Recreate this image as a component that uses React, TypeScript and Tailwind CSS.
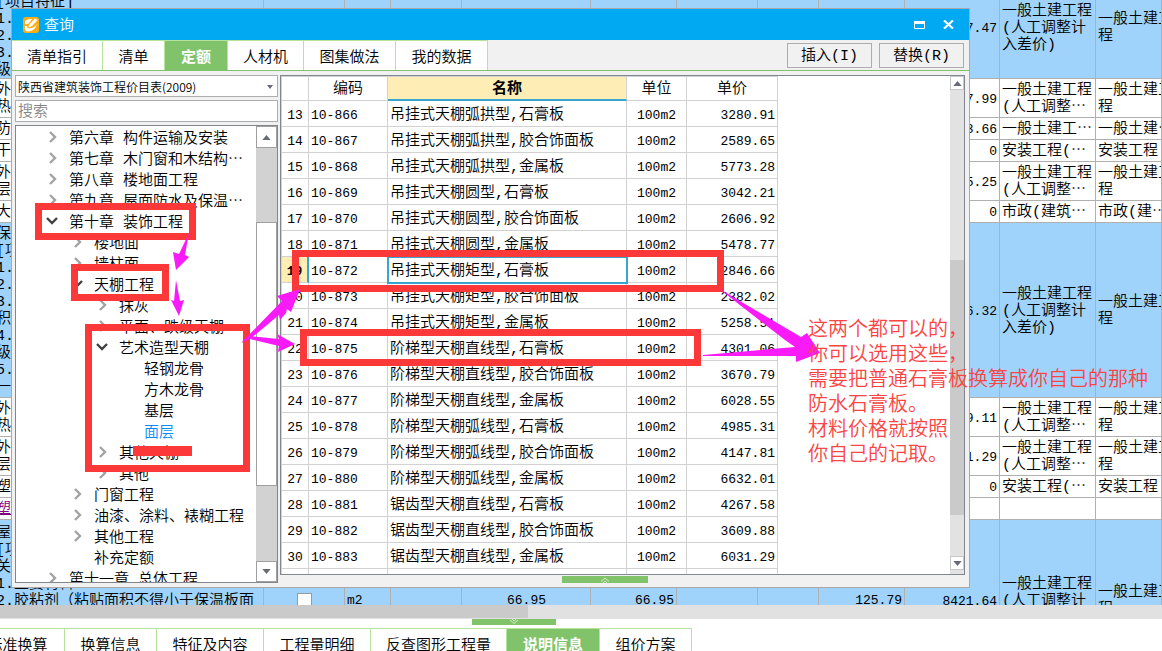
import { useState } from 'react';
import clsx from 'clsx';

interface SheetRow {
  lines: string[];
  height: string;
  amount: string;
  type: string[];
  category: string[];
  blue?: boolean;
  link?: boolean;
  full?: boolean;
}

interface TreeNode {
  label: string;
  level: number;
  state: 'open' | 'closed' | 'leaf';
  selected?: boolean;
}

const sheetRows: SheetRow[] = [
  { lines: ['', '[项目特征]', '1.', '2.', '3.', '级'], height: 'h-[103px]', amount: '7.47', type: ['一般土建工程', '(人工调整计', '入差价)'], category: ['一般土建工', '程'], blue: true },
  { lines: ['外', '热'], height: 'h-[39px]', amount: '7.99', type: ['一般土建工程', '(人工调整⋯'], category: ['一般土建工', '程'] },
  { lines: ['防'], height: 'h-[22px]', amount: '3.66', type: ['一般土建工⋯'], category: ['一般土建⋯'] },
  { lines: ['干'], height: 'h-[22px]', amount: '0', type: ['安装工程(⋯'], category: ['安装工程'] },
  { lines: ['外', '层'], height: 'h-[39px]', amount: '5.25', type: ['一般土建工程', '(人工调整⋯'], category: ['一般土建工', '程'] },
  { lines: ['大'], height: 'h-[22px]', amount: '0', type: ['市政(建筑⋯'], category: ['市政(建⋯'] },
  { lines: ['保', '[项', '1.', '2.', '3.', '积', '4.', '级', '5.', '一'], height: 'h-[175px]', amount: '6.32', type: ['一般土建工程', '(人工调整计', '入差价)'], category: ['一般土建工', '程'], blue: true },
  { lines: ['外', '热'], height: 'h-[39px]', amount: '9.11', type: ['一般土建工程', '(人工调整⋯'], category: ['一般土建工', '程'] },
  { lines: ['外', '层'], height: 'h-[39px]', amount: '1.29', type: ['一般土建工程', '(人工调整⋯'], category: ['一般土建工', '程'] },
  { lines: ['塑'], height: 'h-[22px]', amount: '0', type: ['安装工程(⋯'], category: ['安装工程'] },
  { lines: ['塑'], height: 'h-[22px]', amount: '', type: [], category: [], link: true },
  { lines: ['屋', '[项', '关', '1.主要材料', '2.胶粘剂（粘贴面积不得小于保温板面', '', '', '', ''], height: 'h-[161px]', amount: '8421.64', type: ['一般土建工程', '(人工调整计', '入差价)'], category: ['一般土建工', '程'], blue: true, full: true },
];

const treeNodes: TreeNode[] = [
  { label: '第六章 构件运输及安装', level: 0, state: 'closed' },
  { label: '第七章 木门窗和木结构⋯', level: 0, state: 'closed' },
  { label: '第八章 楼地面工程', level: 0, state: 'closed' },
  { label: '第九章 屋面防水及保温⋯', level: 0, state: 'closed' },
  { label: '第十章 装饰工程', level: 0, state: 'open' },
  { label: '楼地面', level: 1, state: 'closed' },
  { label: '墙柱面', level: 1, state: 'closed' },
  { label: '天棚工程', level: 1, state: 'open' },
  { label: '抹灰', level: 2, state: 'closed' },
  { label: '平面、跌级天棚', level: 2, state: 'closed' },
  { label: '艺术造型天棚', level: 2, state: 'open' },
  { label: '轻钢龙骨', level: 3, state: 'leaf' },
  { label: '方木龙骨', level: 3, state: 'leaf' },
  { label: '基层', level: 3, state: 'leaf' },
  { label: '面层', level: 3, state: 'leaf', selected: true },
  { label: '其他天棚', level: 2, state: 'closed' },
  { label: '其他', level: 2, state: 'closed' },
  { label: '门窗工程', level: 1, state: 'closed' },
  { label: '油漆、涂料、裱糊工程', level: 1, state: 'closed' },
  { label: '其他工程', level: 1, state: 'closed' },
  { label: '补充定额', level: 1, state: 'leaf' },
  { label: '第十一章 总体工程', level: 0, state: 'closed' },
];

const indents = ['pl-[30px]', 'pl-[55px]', 'pl-[80px]', 'pl-[105px]'];

const quotas = [
  { no: 13, code: '10-866', name: '吊挂式天棚弧拱型,石膏板', price: '3280.91' },
  { no: 14, code: '10-867', name: '吊挂式天棚弧拱型,胶合饰面板', price: '2589.65' },
  { no: 15, code: '10-868', name: '吊挂式天棚弧拱型,金属板', price: '5773.28' },
  { no: 16, code: '10-869', name: '吊挂式天棚圆型,石膏板', price: '3042.21' },
  { no: 17, code: '10-870', name: '吊挂式天棚圆型,胶合饰面板', price: '2606.92' },
  { no: 18, code: '10-871', name: '吊挂式天棚圆型,金属板', price: '5478.77' },
  { no: 19, code: '10-872', name: '吊挂式天棚矩型,石膏板', price: '2846.66' },
  { no: 20, code: '10-873', name: '吊挂式天棚矩型,胶合饰面板', price: '2382.02' },
  { no: 21, code: '10-874', name: '吊挂式天棚矩型,金属板', price: '5258.51' },
  { no: 22, code: '10-875', name: '阶梯型天棚直线型,石膏板', price: '4301.06' },
  { no: 23, code: '10-876', name: '阶梯型天棚直线型,胶合饰面板', price: '3670.79' },
  { no: 24, code: '10-877', name: '阶梯型天棚直线型,金属板', price: '6028.55' },
  { no: 25, code: '10-878', name: '阶梯型天棚弧线型,石膏板', price: '4985.31' },
  { no: 26, code: '10-879', name: '阶梯型天棚弧线型,胶合饰面板', price: '4147.81' },
  { no: 27, code: '10-880', name: '阶梯型天棚弧线型,金属板', price: '6632.01' },
  { no: 28, code: '10-881', name: '锯齿型天棚直线型,石膏板', price: '4267.58' },
  { no: 29, code: '10-882', name: '锯齿型天棚直线型,胶合饰面板', price: '3609.88' },
  { no: 30, code: '10-883', name: '锯齿型天棚直线型,金属板', price: '6031.29' },
];

const dialogTabs = [
  { label: '清单指引', width: 'w-[91px]' },
  { label: '清单', width: 'w-[62px]' },
  { label: '定额', width: 'w-[63px]' },
  { label: '人材机', width: 'w-[76px]' },
  { label: '图集做法', width: 'w-[92px]' },
  { label: '我的数据', width: 'w-[92px]' },
];

const bottomTabs = [
  { label: '标准换算', width: 'w-[94px]' },
  { label: '换算信息', width: 'w-[92px]' },
  { label: '特征及内容', width: 'w-[107px]' },
  { label: '工程量明细', width: 'w-[107px]' },
  { label: '反查图形工程量', width: 'w-[136px]' },
  { label: '说明信息', width: 'w-[93px]' },
  { label: '组价方案', width: 'w-[92px]' },
];

const cell = 'border-r border-b border-[#b0b0b0]';
const mono = "font-['Liberation_Mono',monospace] text-[13px]";

const Sheet = () => (
  <table className="-mt-6 -ml-1 w-[calc(100%+4px)] table-fixed border-separate border-spacing-0 leading-[17px] whitespace-nowrap">
    <colgroup>
      <col className="w-[268px]" />
      <col className="w-[81px]" />
      <col className="w-[46px]" />
      <col className="w-[71px]" />
      <col className="w-[129px]" />
      <col className="w-[86px]" />
      <col className="w-[81px]" />
      <col className="w-[61px]" />
      <col className="w-[86px]" />
      <col className="w-[95px]" />
      <col className="w-[96px]" />
      <col />
    </colgroup>
    <tbody>
      {sheetRows.map((row, i) => (
        <tr key={i} className={clsx(row.height, row.blue ? 'bg-[#9fd3fb]' : 'bg-white')}>
          <td className={clsx(cell, row.link && 'text-[#800080] underline')}>
            {row.lines.map((line, n) => (
              <div key={n} className="h-[17px] leading-[20px]">{line}</div>
            ))}
          </td>
          <td className={clsx(cell, 'text-center')}>
            {row.full && (
              <input type="checkbox" aria-label="主要清单" className="block size-[15px] mx-auto appearance-none border border-[#999] bg-white" />
            )}
          </td>
          <td className={clsx(cell, mono, 'pl-[2px]')}>{row.full && 'm2'}</td>
          <td className={cell} />
          <td className={clsx(cell, mono, 'text-right pr-11')}>{row.full && '66.95'}</td>
          <td className={clsx(cell, mono, 'text-right pr-[2px]')}>{row.full && '66.95'}</td>
          <td className={cell} />
          <td className={cell} />
          <td className={clsx(cell, mono, 'text-right pr-[2px]')}>{row.full && '125.79'}</td>
          <td className={clsx(cell, mono, 'text-right pt-[2px] pr-[2px]')}>{row.amount}</td>
          <td className={clsx(cell, 'pl-[2px] overflow-hidden')}>
            {row.type.map((line) => <div key={line} className="h-[17px] leading-[20px]">{line}</div>)}
          </td>
          <td className={clsx(cell, 'pl-[2px] overflow-hidden')}>
            {row.category.map((line) => <div key={line} className="h-[17px] leading-[20px]">{line}</div>)}
          </td>
        </tr>
      ))}
    </tbody>
  </table>
);

const Chevron = ({ state }: { state: TreeNode['state'] }) => {
  if (state === 'leaf') return <span className="w-3" />;
  return (
    <svg viewBox="0 0 12 12" className="size-3 -mt-1" fill="none" strokeWidth="2.4">
      {state === 'open' ? (
        <path d="M1 3 L6 8 L11 3" stroke="#404040" />
      ) : (
        <path d="M4 1 L9 6 L4 11" stroke="#a3a3a3" />
      )}
    </svg>
  );
};

const Triangle = ({ down }: { down?: boolean }) => (
  <svg viewBox="0 0 10 6" className="w-[9px] h-[5px]" fill="#666b75">
    <path d={down ? 'M0 0 H10 L5 6 Z' : 'M0 6 H10 L5 0 Z'} />
  </svg>
);

const QuotaTree = () => (
  <div className="flex-1 min-h-0 flex border border-[#82868f] bg-white">
    <ul className="flex-1 min-w-0 overflow-hidden pt-[2px]">
      {treeNodes.map((node) => (
        <li key={node.label} className={clsx('flex items-center h-[21px] gap-2 whitespace-nowrap', indents[node.level])}>
          <Chevron state={node.state} />
          <span className={clsx('pl-[3px] pt-[2px]', node.selected && 'text-[#0a8cf5]')}>{node.label}</span>
        </li>
      ))}
    </ul>
    <div className="w-[21px] flex flex-col bg-[#d2d2d2]">
      <button aria-label="向上滚动" className="h-[22px] flex items-center justify-center border border-[#a0a0a0] bg-white">
        <Triangle />
      </button>
      <div className="mt-[74px] h-[264px] border border-[#a0a0a0] bg-white" />
      <button aria-label="向下滚动" className="mt-auto h-[21px] flex items-center justify-center border border-[#a0a0a0] bg-white">
        <Triangle down />
      </button>
    </div>
  </div>
);

const gridCell = 'border-r border-b border-[#d2d2d2]';

const QuotaTable = () => (
  <div className="h-[500px] flex border border-[#82868f] bg-white overflow-hidden">
    <div className="flex-1 min-w-0">
      <table className="w-[497px] table-fixed border-separate border-spacing-0 whitespace-nowrap">
        <thead>
          <tr className="h-[25px]">
            <th aria-label="序号" className={clsx(gridCell, 'w-7 border-l border-t')} />
            <th className={clsx(gridCell, 'w-[79px] border-t pt-[2px] font-[350]')}>编码</th>
            <th className="w-[239px] border-r border-t border-b-2 pt-[2px] border-r-[#d2d2d2] border-t-[#d2d2d2] border-b-[#38a5cf] bg-[#ffedb6] font-bold">名称</th>
            <th className={clsx(gridCell, 'w-[60px] border-t pt-[2px] font-[350]')}>单位</th>
            <th className={clsx(gridCell, 'w-[91px] border-t pt-[2px] font-[350]')}>单价</th>
          </tr>
        </thead>
        <tbody>
          {quotas.map((q) => {
            const active = q.no === 19;
            return (
              <tr key={q.no} className="h-[26px]">
                <td className={clsx('border-l border-b border-[#d2d2d2] pt-[3px] text-center', mono, active ? 'border-r-2 border-r-[#38a5cf] bg-[#ffedb6] font-bold' : 'border-r')}>{q.no}</td>
                <td className={clsx(gridCell, mono, 'pt-[3px] pl-[2px]')}>{q.code}</td>
                <td className={clsx(gridCell, 'pt-[3px] pl-[2px]', active && 'outline-2 -outline-offset-1 outline-[#38a5cf]')}>{q.name}</td>
                <td className={clsx(gridCell, mono, 'pt-[3px] text-center')}>100m2</td>
                <td className={clsx(gridCell, mono, 'pt-[3px] text-right pr-[2px]')}>{q.price}</td>
              </tr>
            );
          })}
          <tr className="h-[26px]">
            <td className={clsx(gridCell, 'border-l')} />
            <td className={gridCell} />
            <td className={gridCell} />
            <td className={gridCell} />
            <td className={gridCell} />
          </tr>
        </tbody>
      </table>
    </div>
    <div className="w-[14px] flex flex-col bg-[#e2e2e2] pb-1">
      <button aria-label="表格向上滚动" className="h-[14px] flex items-center justify-center border border-[#c8c8c8] bg-white">
        <Triangle />
      </button>
      <div className="mt-[170px] h-[255px] bg-[#cacaca]" />
      <button aria-label="表格向下滚动" className="mt-auto h-[14px] flex items-center justify-center border border-[#c8c8c8] bg-white">
        <Triangle down />
      </button>
    </div>
  </div>
);

// Red frames, arrows and the note drawn over the window
const Annotations = () => (
  <div className="pointer-events-none absolute left-0 top-0 text-[20px] leading-[25px] text-[#fb4444]">
    <div className="absolute left-[35px] top-[203px] w-[161px] h-[37px] border-[7px] border-[#fd3838]" />
    <div className="absolute left-[71px] top-[264px] w-[98px] h-[37px] border-[7px] border-[#fd3838]" />
    <div className="absolute left-[85px] top-[324px] w-[165px] h-[148px] border-[7px] border-[#fd3838]" />
    <div className="absolute left-[133px] top-[446px] w-[59px] h-[10px] bg-[#fd3838]" />
    <div className="absolute left-[292px] top-[250px] w-[432px] h-[42px] border-[7px] border-[#fd3838]" />
    <div className="absolute left-[300px] top-[329px] w-[401px] h-[37px] border-[7px] border-[#fd3838]" />
    <svg viewBox="0 0 900 500" className="absolute left-0 top-0 w-[900px] h-[500px] max-w-none" fill="#f81bf8">
      <path d="M189 233 L179 254 L173 252 L176 270 L189 257 L185 255 Z" />
      <path d="M176 280 L174 301 L171 300 L179 316 L184 300 L180 301 Z" />
      <path d="M241 343 L282 301 L277 296 L300 289 L291 312 L287 309 L286 313 L280 320 L279 315 L250 339 Z" />
      <path d="M244 340 L248 336 L279 339 L277 334 L295 344 L278 352 L279 346 L250 339 Z" />
      <path d="M718 288 L801 337 L807 333 L820 353 L796 362 L796 356 L703 356 L703 355 L795 347 L785 340 Z" />
    </svg>
    <p className="absolute left-[808px] top-[318px] whitespace-nowrap">
      这两个都可以的，<br />
      你可以选用这些，<br />
      需要把普通石膏板换算成你自己的那种<br />
      防水石膏板。<br />
      材料价格就按照<br />
      你自己的记取。
    </p>
  </div>
);

const QueryDialog = () => {
  const [activeTab, setActiveTab] = useState('定额');

  return (
    <section className="absolute left-[11px] top-2 w-[959px] h-[580px] flex flex-col border border-[#a8a8a8] bg-[#f1f1f1]">
      <header className="h-[31px] flex items-center px-[11px] bg-[#00a9f2] text-white">
        <svg viewBox="0 0 16 16" className="size-4">
          <rect width="16" height="16" rx="3" fill="#ffac12" />
          <path d="M2 4 Q5 1.500 9 2 L7 5 Q5 8 2 7 Z" fill="#fff" />
          <path d="M2 9 Q1 15 6 14.500 Q12 14 14 7 Q11 11 8 11 Q4 12 4 9 Z" fill="#fff" />
          <path d="M4.500 11 L6 7.500 L12 1 L15 3 L9 9.500 Z" fill="#fff" stroke="#ffac12" strokeWidth="0.7" />
        </svg>
        <h1 className="pl-[5px] pt-[3px]">查询</h1>
        <button aria-label="最大化" className="ml-auto">
          <svg viewBox="0 0 11 8" className="w-[11px] h-2" fill="none">
            <path d="M0.500 0.500 H10.500 V7.500 H0.500 Z M0 2 H11" stroke="#fff" />
            <path d="M0 0 H11 V3 H0 Z" fill="#fff" />
          </svg>
        </button>
        <button aria-label="关闭" className="ml-[18px] mr-1">
          <svg viewBox="0 0 11 9" className="w-[11px] h-[9px]" fill="none">
            <path d="M1 0.500 L10 8.500 M10 0.500 L1 8.500" stroke="#fff" strokeWidth="2.200" />
          </svg>
        </button>
      </header>

      <nav className="h-[31px] flex items-stretch border-b border-[#7ec36b]">
        {dialogTabs.map((tab) => (
          <button
            key={tab.label}
            onClick={() => setActiveTab(tab.label)}
            className={clsx(
              'border-r border-t border-[#b5e49a] pt-[5px]',
              tab.width,
              activeTab === tab.label ? 'bg-[#80c36a] text-white font-bold' : 'bg-white'
            )}
          >
            {tab.label}
          </button>
        ))}
        <div className="ml-auto flex items-center gap-[7px] pr-[5px]">
          <button className="w-[85px] h-[25px] border border-[#adadad] pt-[2px]">插入(I)</button>
          <button className="w-[85px] h-[25px] border border-[#adadad] pt-[2px]">替换(R)</button>
        </div>
      </nav>

      <div className="flex-1 min-h-0 flex gap-[2px] pt-1 pl-[3px] pr-1">
        <div className="w-[263px] flex flex-col pb-1">
          <div className="relative">
            <select
              aria-label="定额库"
              className="block w-full h-[22px] appearance-none border border-[#adadad] bg-white pl-[2px] font-['Noto_Sans_CJK_SC',sans-serif] text-[12px]"
            >
              <option>陕西省建筑装饰工程价目表(2009)</option>
            </select>
            <svg viewBox="0 0 6 4" className="absolute right-[5px] top-[10px] w-[6px] h-1" fill="#666b75">
              <path d="M0 0 H6 L3 4 Z" />
            </svg>
          </div>
          <input
            type="text"
            aria-label="搜索"
            placeholder="搜索"
            className="my-[3px] w-full h-[22px] border border-[#adadad] bg-white px-[2px] pt-[2px] placeholder:text-[#858585]"
          />
          <QuotaTree />
        </div>
        <div className="flex-1 min-w-0">
          <QuotaTable />
          <button aria-label="展开" className="ml-[282px] mt-px flex items-center justify-center w-[86px] h-[7px] bg-[#80c36a]">
            <svg viewBox="0 0 10 6" className="w-[10px] h-[6px]" fill="none" stroke="#d4edca">
              <path d="M1 4.500 L5 1 L9 4.500 M3 6 L5 4 L7 6" />
            </svg>
          </button>
        </div>
      </div>
    </section>
  );
};

const App = () => {
  const [activeTab, setActiveTab] = useState('说明信息');

  return (
    <main lang="zh-CN" className="relative h-screen overflow-hidden flex flex-col bg-white font-['Liberation_Mono','Noto_Sans_CJK_SC',sans-serif] font-[350] text-[15px] leading-[17px] text-black">
      <div className="flex-1 min-h-0 overflow-hidden">
        <Sheet />
      </div>
      <div className="h-[14px] shrink-0 bg-[#e1e1e1]">
        <div className="w-[528px] h-[13px] bg-[#cacaca]" />
      </div>
      <button aria-label="收起" className="ml-[472px] mb-[3px] shrink-0 flex items-center justify-center w-[84px] h-[6px] bg-[#80c36a]">
        <svg viewBox="0 0 10 6" className="w-[10px] h-[6px]" fill="none" stroke="#d4edca">
          <path d="M1 1 L5 4.500 L9 1 M3 0 L5 2 L7 0" />
        </svg>
      </button>
      <nav className="-ml-[29px] shrink-0 h-[23px] flex overflow-hidden">
        {bottomTabs.map((tab) => (
          <button
            key={tab.label}
            onClick={() => setActiveTab(tab.label)}
            className={clsx(
              'h-8 shrink-0 border-t border-r border-[#b5e49a] pt-[3px] whitespace-nowrap',
              tab.width,
              activeTab === tab.label ? 'bg-[#80c36a] text-white font-bold' : 'bg-white'
            )}
          >
            {tab.label}
          </button>
        ))}
      </nav>
      <QueryDialog />
      <Annotations />
    </main>
  );
};

export default App;
